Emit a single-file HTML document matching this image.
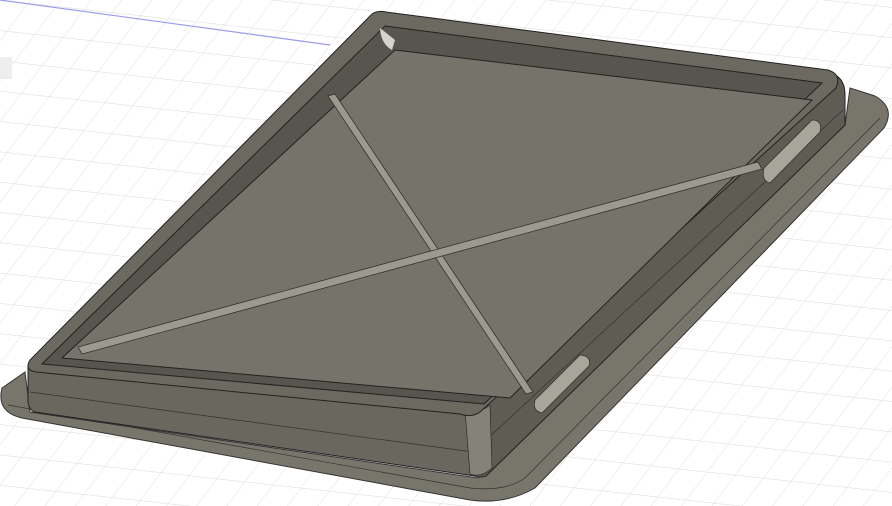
<!DOCTYPE html>
<html><head><style>
html,body{margin:0;padding:0;background:#fff;width:892px;height:506px;overflow:hidden}
svg{display:block}
</style></head><body>
<svg width="892" height="506" viewBox="0 0 892 506" xmlns="http://www.w3.org/2000/svg">
<defs>
<pattern id="g" width="28" height="28" patternUnits="userSpaceOnUse" patternTransform="matrix(1,0.11,-0.75,1,0,0)">
<path d="M0 0H28M0 0V28" stroke="#dcdcdc" stroke-width="1" fill="none"/>
</pattern>
</defs>
<rect width="892" height="506" fill="#fff"/>
<rect width="892" height="506" fill="url(#g)"/>
<line x1="0" y1="0" x2="330" y2="45" stroke="#9b9bf0" stroke-width="1.2"/>
<rect x="0" y="57" width="12" height="22" fill="#eee"/>
<!-- flange -->
<path d="M25 372 L2 388 Q-4 412 22 418 L470 500 Q505 505 535 488 L884 128 Q896 108 875 96 L850 88 L845 125 L478 478 L30 412 Z" fill="#78756b" stroke="#333" stroke-width="1"/>
<path d="M8 405 L470 488 Q505 492 525 478 L880 118" fill="none" stroke="#333" stroke-width="0.7"/>
<!-- outer front-left face -->
<path d="M28 365 L470 412 L475 476 L35 412 Q28 410 28 400 Z" fill="#6a675e" stroke="#222" stroke-width="1"/>
<path d="M30 392 L473 452" stroke="#333" stroke-width="0.7"/>
<!-- outer front-right face -->
<path d="M470 412 L835 75 Q845 80 845 95 L845 125 L486 476 Q478 478 475 476 Z" fill="#5f5c54" stroke="#222" stroke-width="1"/>
<path d="M473 452 L843 110" stroke="#333" stroke-width="0.7"/>
<!-- front corner -->
<path d="M465 410 Q478 415 490 405 L492 468 Q482 478 470 474 Z" fill="#85827a" stroke="#222" stroke-width="0.6"/>
<!-- rim top -->
<path d="M372 14 Q378 10 386 12 L828 70 Q842 74 836 88 L480 412 Q472 418 460 414 L36 372 Q24 370 30 360 Z" fill="#6c6960" stroke="#222" stroke-width="1"/>
<!-- inner walls -->
<path d="M385 26 L822 83 L484 404 L42 364 Z" fill="#58554e" stroke="#222" stroke-width="1"/>
<!-- floor -->
<path d="M395 50 L812 100 L510 398 L62 358 Z" fill="#76736a" stroke="#222" stroke-width="1"/>
<!-- corner highlights -->
<path d="M380 28 Q381 44 392 50 L395 40 Z" fill="#d4d4ce"/>
<!-- ribs -->
<path d="M328 96 L335 94 L533 392 L526 394 Z" fill="#9c998e" stroke="#333" stroke-width="0.8"/>
<path d="M78 347 L758 162 L762 169 L82 354 Z" fill="#9c998e" stroke="#333" stroke-width="0.8"/>
<!-- handles -->
<path d="M764 168 L812 120 Q823 120 820 132 L770 183 Q761 181 764 168 Z" fill="#a8a59a" stroke="#333" stroke-width="0.8"/>
<path d="M535 400 L580 355 Q592 356 589 366 L542 413 Q532 411 535 400 Z" fill="#a8a59a" stroke="#333" stroke-width="0.8"/>
</svg>
</body></html>
